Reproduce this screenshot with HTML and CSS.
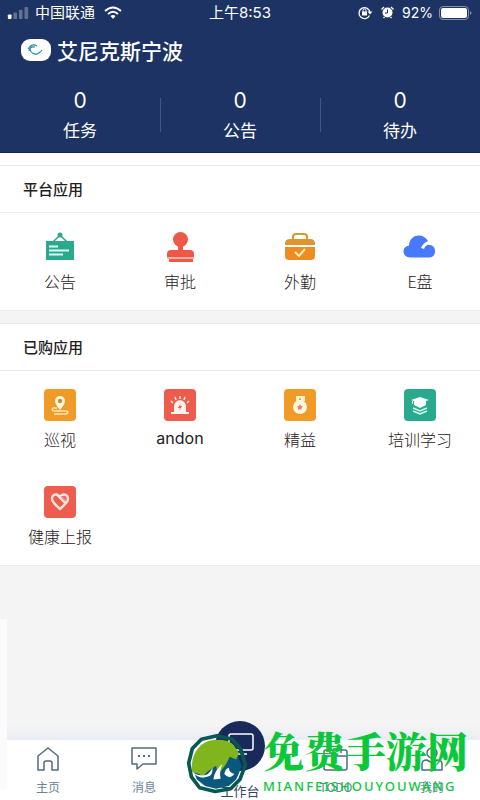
FILE: index.html
```html
<!DOCTYPE html>
<html lang="zh-CN">
<head>
<meta charset="utf-8">
<meta name="viewport" content="width=device-width, initial-scale=1">
<title>工作台</title>
<link rel="stylesheet" href="styles.css">
</head>
<body>
<div class="app">
  <header class="header">
    <div class="status">
      <div class="status-side">
        <svg width="22" height="12" viewBox="0 0 22 13"><rect y="8" width="4" height="5" rx="1" fill="#fff"/><g fill="#fff" opacity=".3"><rect x="6" y="6" width="4" height="7" rx="1"/><rect x="12" y="3" width="4" height="10" rx="1"/><rect x="18" width="4" height="13" rx="1"/></g></svg>
        <span class="carrier">中国联通</span>
        <svg width="18" height="13" viewBox="0 0 18 13" fill="none" stroke="#fff" stroke-width="2"><path d="M1 5Q9-2 17 5M4 8Q9 3.500 14 8"/><path d="M6.500 10Q9 8 11.500 10L9 13Z" fill="#fff" stroke="none"/></svg>
      </div>
      <time>上午8:53</time>
      <div class="status-side right">
        <svg width="15" height="13" viewBox="0 0 15 13"><path d="M11.500 9.500A5.500 5.500 0 1 1 12 6.500" fill="none" stroke="#fff" stroke-width="1.300"/><path d="M9.500 5.500h5L12 8.500zM4 5.500h5v4H4z" fill="#fff"/><path d="M5 6V4.500a1.500 1.500 0 0 1 3 0V6" fill="none" stroke="#fff"/></svg>
        <svg class="alarm" width="13" height="13" viewBox="0 0 13 13"><circle cx="6.500" cy="6.500" r="5" fill="#fff"/><path d="M.5 3.500 3 1M10 1l2.500 2.500M2.500 12l1-1M10.500 12l-1-1" stroke="#fff" stroke-width="1.300"/><path d="M6.500 3.500v3.500H4" fill="none" stroke="#1c3363"/></svg>
        <span>92%</span>
        <svg width="34" height="14" viewBox="0 0 34 14"><rect x=".5" y=".5" width="29" height="13" rx="3.500" fill="none" stroke="#8492b0"/><rect x="2" y="2" width="26" height="10" rx="2" fill="#fff"/><path d="M31 5q3 2 0 4z" fill="#8492b0"/></svg>
      </div>
    </div>
    <div class="brand">
      <svg width="30" height="24" viewBox="0 0 30 24"><rect y="1" width="30" height="22" rx="9" fill="#fff"/><path d="M7 11q4-6 9-3M8 13q1-5 6-4M9 11q1 5 6 5 3 0 6-4M12 15q3 3 7-1" fill="none" stroke="#218ba0" stroke-width="1.200"/></svg>
      <h1>艾尼克斯宁波</h1>
    </div>
    <dl class="stats">
      <div><dt>任务</dt><dd>0</dd></div>
      <div><dt>公告</dt><dd>0</dd></div>
      <div><dt>待办</dt><dd>0</dd></div>
    </dl>
  </header>
  <main>
    <section class="panel">
      <h2>平台应用</h2>
      <div class="apps">
        <a href="#"><svg viewBox="0 0 32 32"><path d="M2 10h28v19H2z" fill="#2aaa8c"/><path d="m9 11 7-7 7 7" fill="none" stroke="#2aaa8c" stroke-width="1.500"/><circle cx="16" cy="4" r="2.500" fill="#2aaa8c"/><path d="M5 15.500h9M5 19.500h20M5 23.500h14" stroke="#d8fff4" stroke-width="1.800"/></svg><span>公告</span></a>
        <a href="#"><svg viewBox="0 0 32 32" fill="#ee5947"><path d="M14 15h5v7h-5z"/><circle cx="16.500" cy="8.500" r="7.500"/><path d="M3 26v-3q0-4 4-4h19q4 0 4 4v3z"/><path d="M3 26h27v2H3z" fill="#f9b0a4"/><path d="M5 28h24v3H5z"/></svg><span>审批</span></a>
        <a href="#"><svg viewBox="0 0 32 32"><path d="M9 9V6q0-3 3-3h8q3 0 3 3v3" fill="none" stroke="#df9430" stroke-width="2"/><path d="M1 14v-1q0-5 5-5h20q5 0 5 5v1z" fill="#df9430"/><path d="M1 16h30v9q0 4-4 4H5q-4 0-4-4z" fill="#ee8c22"/><path d="m11 21 4 4 6-7" fill="none" stroke="#fff3bd" stroke-width="2"/></svg><span>外勤</span></a>
        <a href="#"><svg viewBox="0 0 32 32"><path d="M6 26.500a6 6 0 0 1-1-12C6 2 20 2 24 10q-5 2-7 7l3 1q2-5 6-4c7 1 7 12.500-1 12.500z" fill="#4679fb"/></svg><span>E盘</span></a>
      </div>
    </section>
    <section class="panel purchased">
      <h2>已购应用</h2>
      <div class="apps">
        <a href="#"><svg viewBox="0 0 32 32"><rect width="32" height="32" rx="4" fill="#f09a28"/><path d="M16 21q-5-6-5-9a5 5 0 0 1 10 0q0 3-5 9z" fill="#fff8dc"/><circle cx="16" cy="12" r="2.200" fill="#c58b49"/><path d="M13 19H9q-2 2 1 3h12q4 1 0 3H10" fill="none" stroke="#ffecb8" stroke-width="1.500"/></svg><span>巡视</span></a>
        <a href="#"><svg viewBox="0 0 32 32"><rect width="32" height="32" rx="4" fill="#ed5c4d"/><path d="M10 23v-5c0-9 12-9 12 0v5h3v2H7v-2z" fill="#fff4ed"/><path d="m7 12 2 2M11 8l1 3M16 7v3M21 8l-1 3M25 12l-2 2" stroke="#fff4ed" stroke-width="1.500"/><path d="m17 14-3 5h2l-1 3 3-5h-2z" fill="#ed5c4d"/></svg><span class="latin">andon</span></a>
        <a href="#"><svg viewBox="0 0 32 32"><rect width="32" height="32" rx="4" fill="#f09a28"/><path d="M12 7h9v5h-9z" fill="#fff5c8"/><circle cx="16" cy="18" r="7" fill="#fff5db"/><path d="m16 8 1 3h-2zM16 15l1 2 2 .5-1.500 1.500v2L16 20l-2 1v-2l-1-1.500 2-.5z" fill="#df8370"/></svg><span>精益</span></a>
        <a href="#"><svg viewBox="0 0 32 32"><rect width="32" height="32" rx="4" fill="#2aaa8c"/><path d="m7 11 9-3 9 3-3 1v4l-6 3-6-3v-4zM9 12v3H8v-3z" fill="#fff"/><path d="m9 19 7 3 7-3M9 22l7 3 7-3" fill="none" stroke="#cffff1" stroke-width="1.500"/></svg><span>培训学习</span></a>
        <a href="#"><svg viewBox="0 0 32 32"><rect width="32" height="32" rx="4" fill="#ed5c4d"/><path d="m16 10 3-1.500q5 0 5 4.500 0 3-8 10Q8 16 8 13q0-5 5-4.500l8 8" fill="none" stroke="#ffe4dd" stroke-width="2.500" stroke-linejoin="round"/><path d="m18 11 4 4" stroke="#e591a0" stroke-width="2"/></svg><span>健康上报</span></a>
      </div>
    </section>
  </main>
  <div class="edge"></div>
  <nav class="tabs">
    <a href="#"><svg viewBox="0 0 26 26"><path d="M3 24V10L13 2l10 8v14h-6v-7q0-2-2-2h-4q-2 0-2 2v7z"/></svg><span>主页</span></a>
    <a href="#"><svg viewBox="0 0 26 26"><path d="M1 2h24v16H12l-6 5v-5H1z"/><path d="M7 10h2m3 0h2m3 0h2" stroke-width="2"/></svg><span>消息</span></a>
    <a href="#" class="work"><span class="disc"><svg viewBox="0 0 26 26"><rect x="2" y="1" width="24" height="16" rx="2"/><path d="M4 21h18" stroke-dasharray="4 2"/></svg></span><span>工作台</span></a>
    <a href="#"><svg viewBox="0 0 26 26"><rect x="1" y="4" width="23" height="20" rx="2"/><path d="M1 10h23M7 1v6m11-6v6"/></svg><span>TODO</span></a>
    <a href="#"><svg viewBox="0 0 26 26"><circle cx="13" cy="7" r="5"/><path d="M3 24v-6q0-4 5-4l5 3 5-3q5 0 5 4v6z"/></svg><span>我的</span></a>
  </nav>
  <aside class="watermark">
    <svg width="64" height="62" viewBox="0 0 70 66"><path d="m18 6 17-4 17 4 9 11 5 17-6 16-10 10-17 3-17-4-9-12-3-15 4-16z" fill="none" stroke="#07594f" stroke-width="4" stroke-linejoin="round"/><path d="m8 38 5 12 9 7 12 3 14-3 8-7 6-14-4-12-10-6-14 3-9 12z" fill="#08587f"/><path d="M8 42C5 25 15 9 29 7q17-2 24 5l6 9-3 7-7-3-4 8-9 12-2-10-9 6q-5 4-5 8l-4-5z" fill="#80b51d"/><path d="M8 42q16 9 22-5 1 9-6 10-8 3-16-5zm23 8q1-10 10-17-4 9-2 16zm12-6q1-6 5-7 0 5 6 7-5 7-11 0z" fill="#fff"/></svg>
    <div class="words"><strong>免费手游网</strong><small>MIANFEISHOUYOUWANG</small></div>
  </aside>
</div>
</body>
</html>
```
FILE: styles.css
```css
* { box-sizing: border-box; }
body {
  margin: 0;
  font-family: "Noto Sans CJK SC", sans-serif;
  color: #1f2022;
  background: #f4f4f4;
}
a { color: inherit; text-decoration: none; }
svg { display: block; flex: none; overflow: visible; }
h1, h2, dl, dd { margin: 0; }
.app { position: relative; min-height: 100vh; display: flex; flex-direction: column; }
.header { color: #fff; background: #1c3363; border-bottom: 1px solid #152653; }
.status {
  display: grid;
  grid-template-columns: 1fr auto 1fr;
  align-items: center;
  height: 25px;
  padding: 0 7px;
  font: 15px/24px Inter, "Noto Sans CJK SC", sans-serif;
}
.status-side { display: flex; align-items: center; gap: 6px; }
.carrier { margin-right: 3px; }
.right { justify-content: flex-end; font-size: 14px; }
.alarm { margin: 0 2px; }
.brand { display: flex; align-items: center; gap: 6px; height: 50px; padding-left: 21px; }
.brand h1 { font-size: 21px; line-height: 30px; font-weight: 500; }
.stats { display: grid; grid-template-columns: repeat(3, 1fr); height: 77px; padding-top: 11px; }
.stats div { display: flex; flex-direction: column-reverse; justify-content: flex-end; align-items: center; position: relative; }
.stats div + div::before { content: ""; position: absolute; left: 0; top: 12px; height: 34px; border-left: 1px solid #425682; }
.stats dt { font-size: 17px; line-height: 28px; }
.stats dd { font: 21px/30px Inter, sans-serif; }
.panel { background: #fff; padding-top: 12px; border-bottom: 1px solid #ececec; }
.panel h2 {
  margin: 0;
  padding: 0 23px;
  font-size: 15px;
  line-height: 46px;
  font-weight: 500;
  border: solid #e9e9e9;
  border-width: 1px 0;
}
.purchased { padding: 0; margin-top: 12px; }
.apps { display: grid; grid-template-columns: repeat(4, 1fr); row-gap: 34px; padding: 18px 0 16px; }
.apps a { display: flex; flex-direction: column; align-items: center; gap: 6px; font-size: 16px; line-height: 25px; font-weight: 300; }
.apps svg { width: 32px; height: 32px; }
.apps .latin { font-family: Inter, sans-serif; font-weight: 400; line-height: 22px; }
.tabs {
  display: grid;
  grid-template-columns: repeat(5, 1fr);
  margin-top: auto;
  height: 60px;
  padding-top: 6px;
  background: #fff;
  color: #67839e;
  box-shadow: 0 -3px 14px #e3e7f3;
}
.tabs a { position: relative; display: flex; flex-direction: column; align-items: center; font-size: 12px; line-height: 18px; gap: 6px; }
.tabs svg { width: 26px; height: 26px; fill: none; stroke: #526b7f; stroke-width: 1.5; stroke-linejoin: round; }
.tabs .work { justify-content: flex-end; color: #34465f; font-size: 13px; }
.disc { position: absolute; top: -25px; display: grid; place-items: center; width: 50px; height: 50px; border-radius: 50%; background: #19295b; }
.tabs .work svg { stroke: #fff; }
.edge { position: absolute; left: 0; bottom: 11px; width: 7px; height: 170px; background: #fbfbfb; }
.watermark { position: absolute; right: 12px; bottom: 0; display: flex; align-items: center; gap: 14px; color: #0bc83b; }
.words { display: flex; flex-direction: column; }
.words strong { font-family: "Noto Serif CJK SC", "Noto Sans CJK SC", serif; font-size: 41px; line-height: 44px; font-weight: 900; }
.words small { font: 500 13px/28px "Noto Sans", sans-serif; letter-spacing: 2px; }
```
